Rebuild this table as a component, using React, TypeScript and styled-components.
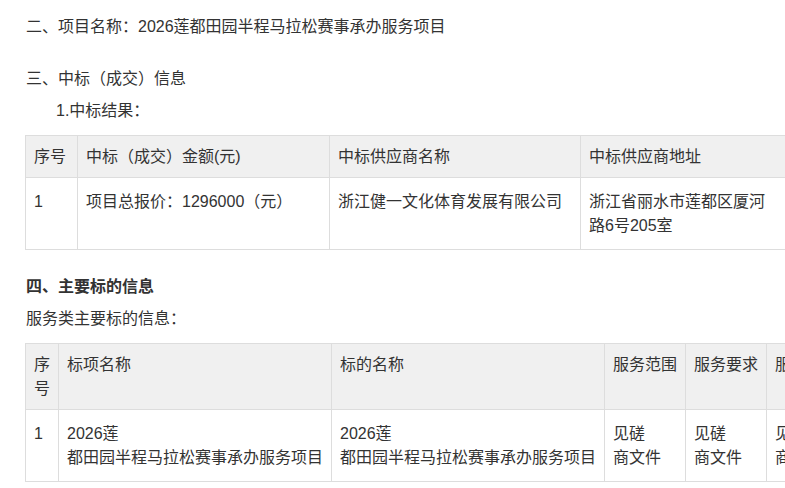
import React from 'react'
import styled, { createGlobalStyle } from 'styled-components'

const GlobalStyle = createGlobalStyle`
  html, body {
    margin: 0;
    padding: 0;
    background: #fff;
    overflow: hidden;
  }
  body {
    font-family: "Liberation Sans", "Noto Sans CJK SC", sans-serif;
    font-size: 16px;
    line-height: 24px;
    color: #333;
  }
`

const Page = styled.div`
  padding: 15px 0 0 25px;
  width: 960px;
`

const Para = styled.p<{ $top?: number; $indent?: number; $bold?: boolean }>`
  margin: ${({ $top }) => $top ?? 0}px 0 0 0;
  padding-left: ${({ $indent }) => $indent ?? 1}px;
  font-weight: ${({ $bold }) => ($bold ? 700 : 400)};
  white-space: nowrap;
`

const Table = styled.table<{ $width: number }>`
  margin-top: 12px;
  width: ${({ $width }) => $width}px;
  border-collapse: collapse;
  table-layout: fixed;
`

const HeadCell = styled.th`
  background: #f0f0f0;
  border: 1px solid #dddddd;
  padding: 9px 8px 8px;
  text-align: left;
  vertical-align: top;
  font-weight: 400;
  white-space: nowrap;
  overflow: hidden;
`

const Cell = styled.td`
  border: 1px solid #dddddd;
  padding: 12px 8px 11px;
  text-align: left;
  vertical-align: top;
  white-space: nowrap;
  overflow: hidden;
`

const resultCols = [52, 252, 251, 230]
const subjectCols = [33, 273, 273, 81, 81, 81, 81]
const sum = (list: number[]) => list.reduce((a, b) => a + b, 0)

const App = () => {
  return (
    <>
      <GlobalStyle />
      <Page>
        <Para>二、项目名称：2026莲都田园半程马拉松赛事承办服务项目</Para>

        <Para $top={28}>三、中标（成交）信息</Para>
        <Para $top={8} $indent={31}>1.中标结果：</Para>

        <Table $width={sum(resultCols)}>
          <colgroup>
            {resultCols.map((w, i) => (
              <col key={i} style={{ width: w }} />
            ))}
          </colgroup>
          <thead>
            <tr>
              <HeadCell>序号</HeadCell>
              <HeadCell>中标（成交）金额(元)</HeadCell>
              <HeadCell>中标供应商名称</HeadCell>
              <HeadCell>中标供应商地址</HeadCell>
            </tr>
          </thead>
          <tbody>
            <tr>
              <Cell>1</Cell>
              <Cell>项目总报价：1296000（元）</Cell>
              <Cell>浙江健一文化体育发展有限公司</Cell>
              <Cell>
                浙江省丽水市莲都区厦河
                <br />
                路6号205室
              </Cell>
            </tr>
          </tbody>
        </Table>

        <Para $top={25} $bold>四、主要标的信息</Para>
        <Para $top={8}>服务类主要标的信息：</Para>

        <Table $width={sum(subjectCols)}>
          <colgroup>
            {subjectCols.map((w, i) => (
              <col key={i} style={{ width: w }} />
            ))}
          </colgroup>
          <thead>
            <tr>
              <HeadCell>
                序<br />号
              </HeadCell>
              <HeadCell>标项名称</HeadCell>
              <HeadCell>标的名称</HeadCell>
              <HeadCell>服务范围</HeadCell>
              <HeadCell>服务要求</HeadCell>
              <HeadCell>服务时间</HeadCell>
              <HeadCell>服务标准</HeadCell>
            </tr>
          </thead>
          <tbody>
            <tr>
              <Cell>1</Cell>
              <Cell>
                2026莲
                <br />
                都田园半程马拉松赛事承办服务项目
              </Cell>
              <Cell>
                2026莲
                <br />
                都田园半程马拉松赛事承办服务项目
              </Cell>
              <Cell>
                见磋
                <br />
                商文件
              </Cell>
              <Cell>
                见磋
                <br />
                商文件
              </Cell>
              <Cell>
                见磋
                <br />
                商文件
              </Cell>
              <Cell>
                见磋
                <br />
                商文件
              </Cell>
            </tr>
          </tbody>
        </Table>
      </Page>
    </>
  )
}

export default App
